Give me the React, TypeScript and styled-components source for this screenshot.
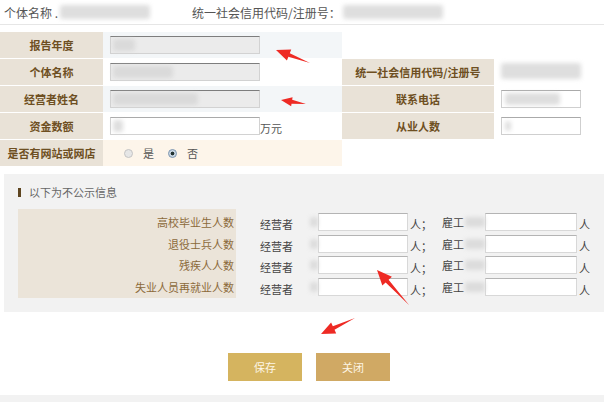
import styled, { createGlobalStyle } from 'styled-components';

const GlobalStyle = createGlobalStyle`
  html, body {
    margin: 0;
    padding: 0;
    background: #fff;
  }
  body {
    font-family: "Noto Sans CJK SC", "Noto Sans", "Liberation Sans", sans-serif;
    font-size: 12px;
    color: #444;
  }
`;

const baseRows = [
  { label: '报告年度', tone: 'blue', field: 'grey', blur: 22, right: null },
  { label: '个体名称', tone: 'white', field: 'grey', blur: 60, right: { label: '统一社会信用代码/注册号', kind: 'blur' } },
  { label: '经营者姓名', tone: 'blue', field: 'grey', blur: 85, right: { label: '联系电话', kind: 'phone' } },
  { label: '资金数额', tone: 'white', field: 'white', blur: 10, right: { label: '从业人数', kind: 'input' } },
];

const hiddenRows = ['高校毕业生人数', '退役士兵人数', '残疾人人数', '失业人员再就业人数'];

type Pt = [number, number];

// builds a tapered arrow polygon from tail to tip
function arrowPoints(tail: Pt, tip: Pt, head = 13, width = 11) {
  const dx = tip[0] - tail[0];
  const dy = tip[1] - tail[1];
  const len = Math.hypot(dx, dy);
  const ux = dx / len;
  const uy = dy / len;
  const nx = -uy;
  const ny = ux;
  const bx = tip[0] - ux * head;
  const by = tip[1] - uy * head;
  const pts: Pt[] = [
    [tail[0], tail[1]],
    [bx + nx * 2, by + ny * 2],
    [bx + nx * (width / 2), by + ny * (width / 2)],
    [tip[0], tip[1]],
    [bx - nx * (width / 2), by - ny * (width / 2)],
    [bx - nx * 2, by - ny * 2],
  ];
  return pts.map((p) => p.join(',')).join(' ');
}

export default function App() {
  return (
    <>
      <GlobalStyle />
      <Page>
        <Header>
          <HeaderItem>
            个体名称 .<Blur $w={90} $h={14} />
          </HeaderItem>
          <HeaderItem>
            统一社会信用代码/注册号：<Blur $w={100} $h={14} />
          </HeaderItem>
        </Header>

        <InfoTable>
          <colgroup>
            <col style={{ width: 103 }} />
            <col style={{ width: 239 }} />
            <col style={{ width: 152 }} />
            <col />
          </colgroup>
          <tbody>
            {baseRows.map((row) => (
              <tr key={row.label}>
                <LabelCell>{row.label}</LabelCell>
                <ValueCell $tone={row.tone}>
                  <FieldWrap>
                    <Field $kind={row.field}>
                      <Blur $w={row.blur} $h={12} />
                    </Field>
                    {row.label === '资金数额' && <Unit>万元</Unit>}
                  </FieldWrap>
                </ValueCell>
                {row.right ? (
                  <>
                    <LabelCell>{row.right.label}</LabelCell>
                    <ValueCell $tone="white">
                      {row.right.kind === 'blur' && <Blur $w={80} $h={16} />}
                      {row.right.kind === 'phone' && (
                        <SmallField>
                          <Blur $w={55} $h={12} />
                        </SmallField>
                      )}
                      {row.right.kind === 'input' && (
                        <SmallField>
                          <Blur $w={6} $h={10} />
                        </SmallField>
                      )}
                    </ValueCell>
                  </>
                ) : (
                  <EmptyCell colSpan={2} />
                )}
              </tr>
            ))}
            <tr>
              <LabelCell>是否有网站或网店</LabelCell>
              <ValueCell $tone="cream">
                <RadioGroup>
                  <RadioItem>
                    <Radio $checked={false} />是
                  </RadioItem>
                  <RadioItem>
                    <Radio $checked />否
                  </RadioItem>
                </RadioGroup>
              </ValueCell>
              <EmptyCell colSpan={2} />
            </tr>
          </tbody>
        </InfoTable>

        <Section>
          <SectionTitle>以下为不公示信息</SectionTitle>
          <HiddenGrid>
            {hiddenRows.map((label) => (
              <HiddenRow key={label}>
                <HiddenLabel>{label}</HiddenLabel>
                <Counts>
                  <Owner>经营者</Owner>
                  <Blur $w={8} $h={10} />
                  <CountInput />
                  <Suffix>人；</Suffix>
                  <Staff>雇工</Staff>
                  <Blur $w={20} $h={10} />
                  <CountInput $wide />
                  <Suffix>人</Suffix>
                </Counts>
              </HiddenRow>
            ))}
          </HiddenGrid>
        </Section>

        <Actions>
          <ActionButton $color="#d5b45f">保存</ActionButton>
          <ActionButton $color="#d0a964">关闭</ActionButton>
        </Actions>
        <BottomBand />

        <Overlay viewBox="0 0 604 402" width="604" height="402">
          <polygon fill="#ee2a24" points={arrowPoints([310, 63], [276, 50], 14, 12)} />
          <polygon fill="#ee2a24" points={arrowPoints([306, 104], [281, 100], 11, 9)} />
          <polygon fill="#ee2a24" points={arrowPoints([409, 305], [377, 270], 15, 13)} />
          <polygon fill="#ee2a24" points={arrowPoints([355, 318], [321, 334], 14, 12)} />
        </Overlay>
      </Page>
    </>
  );
}

const Page = styled.div`
  position: relative;
  width: 604px;
  height: 402px;
  overflow: hidden;
`;

const Header = styled.div`
  display: flex;
  align-items: center;
  gap: 42px;
  height: 24px;
  padding-left: 4px;
  border-bottom: 1px solid #e6e6e6;
  margin-bottom: 7px;
  font-size: 12px;
  color: #555;
`;

const HeaderItem = styled.div`
  display: flex;
  align-items: center;
  gap: 2px;
`;

const Blur = styled.span<{ $w: number; $h: number }>`
  display: inline-block;
  flex: none;
  width: ${(p) => p.$w}px;
  height: ${(p) => p.$h}px;
  background: #d6d6d6;
  border-radius: 3px;
  filter: blur(2px);
  opacity: 0.8;
`;

const InfoTable = styled.table`
  width: 604px;
  border-collapse: collapse;
  table-layout: fixed;

  td {
    height: 26px;
    padding: 0;
    border-bottom: 1px solid #fff;
  }
`;

const LabelCell = styled.td`
  background: #e9e2d7;
  color: #6e4f22;
  font-weight: bold;
  font-size: 11px;
  text-align: center;
`;

const toneColors: Record<string, string> = {
  blue: '#f3f6f8',
  white: '#ffffff',
  cream: '#fdf5ea',
};

const ValueCell = styled.td<{ $tone: string }>`
  background: ${(p) => toneColors[p.$tone]};
  padding-left: 7px !important;
`;

const EmptyCell = styled.td`
  background: #fff;
`;

const FieldWrap = styled.div`
  display: flex;
  align-items: center;
`;

const Field = styled.div<{ $kind: string }>`
  box-sizing: border-box;
  display: flex;
  align-items: center;
  width: 150px;
  height: 18px;
  padding-left: 2px;
  background: ${(p) => (p.$kind === 'grey' ? '#ebebeb' : '#fff')};
  border: 1px solid #d2d2d2;
  border-top: 1px solid ${(p) => (p.$kind === 'grey' ? '#7d7d7d' : '#aaa')};
`;

const Unit = styled.span`
  font-size: 11px;
  color: #555;
  padding-top: 4px;
`;

const SmallField = styled.div`
  box-sizing: border-box;
  display: flex;
  align-items: center;
  width: 80px;
  height: 18px;
  padding-left: 3px;
  border: 1px solid #cfcfcf;
  border-top-color: #aaa;
  background: #fff;
`;

const RadioGroup = styled.div`
  display: flex;
  align-items: center;
  gap: 14px;
  padding-left: 14px;
  font-size: 11px;
  color: #555;
`;

const RadioItem = styled.span`
  display: flex;
  align-items: center;
  gap: 10px;
`;

const Radio = styled.span<{ $checked: boolean }>`
  box-sizing: border-box;
  width: 9px;
  height: 9px;
  border-radius: 50%;
  border: 1px solid ${(p) => (p.$checked ? '#7f97b0' : '#c4c4c4')};
  background: ${(p) =>
    p.$checked ? 'radial-gradient(circle, #233 0 1.6px, #c8d6e3 2.2px)' : '#e6e6e6'};
`;

const Section = styled.div`
  margin: 7px 0 0 4px;
  height: 138px;
  box-sizing: border-box;
  padding: 11px 14px 0;
  background: #f2f2f2;
`;

const SectionTitle = styled.div`
  display: flex;
  align-items: center;
  gap: 8px;
  height: 14px;
  font-size: 11px;
  color: #666;

  &::before {
    content: '';
    width: 3px;
    height: 9px;
    background: #5e4520;
  }
`;

const HiddenGrid = styled.div`
  margin-top: 10px;
  display: flex;
  flex-direction: column;
  background: linear-gradient(to right, #ebe4d9 0 218px, transparent 218px);
  height: 89px;
  padding-top: 2px;
  box-sizing: border-box;
`;

const HiddenRow = styled.div`
  display: grid;
  grid-template-columns: 218px 1fr;
  align-items: center;
  height: 22px;
`;

const HiddenLabel = styled.span`
  text-align: right;
  padding-right: 2px;
  font-size: 11px;
  color: #8c6a3b;
`;

const Counts = styled.div`
  display: flex;
  align-items: center;
  padding-left: 24px;
  font-size: 11px;
  color: #444;
`;

const Owner = styled.span`
  width: 50px;
  padding-top: 4px;
`;

const Suffix = styled.span`
  padding-top: 5px;
`;

const CountInput = styled.div<{ $wide?: boolean }>`
  box-sizing: border-box;
  width: ${(p) => (p.$wide ? 92 : 90)}px;
  height: 18px;
  margin-right: 2px;
  background: #fff;
  border: 1px solid #d8d8d8;
  border-top-color: #b4b4b4;
`;

const Staff = styled.span`
  margin: 0 1px 0 10px;
`;

const Actions = styled.div`
  display: flex;
  justify-content: center;
  gap: 14px;
  padding-left: 14px;
  margin-top: 41px;
`;

const ActionButton = styled.div<{ $color: string }>`
  width: 74px;
  height: 28px;
  display: flex;
  align-items: center;
  justify-content: center;
  background: ${(p) => p.$color};
  color: #fdf6e6;
  font-size: 11px;
`;

const BottomBand = styled.div`
  margin-top: 14px;
  height: 8px;
  background: #f2f2f2;
`;

const Overlay = styled.svg`
  position: absolute;
  left: 0;
  top: 0;
  pointer-events: none;
`;
